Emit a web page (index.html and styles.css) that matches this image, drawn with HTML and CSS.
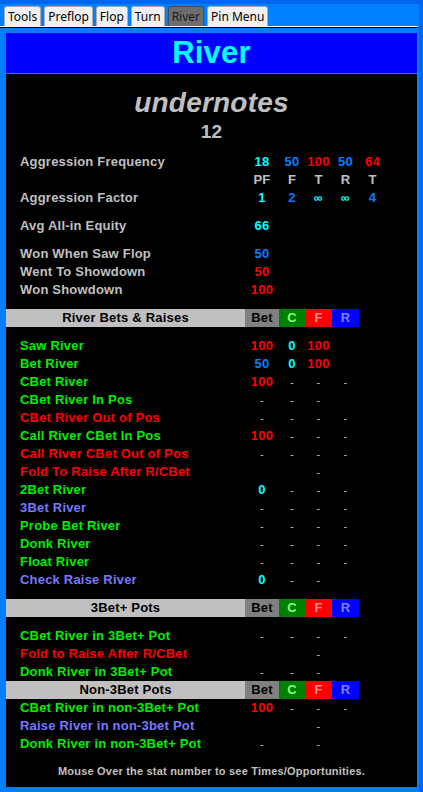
FILE: index.html
```html
<!DOCTYPE html>
<html lang="en">
<head>
  <meta charset="UTF-8">
  <meta name="viewport" content="width=device-width, initial-scale=1.0">
  <title>River</title>
  <link rel="stylesheet" href="styles.css">
</head>
<body>
  <div id="window">
    <div class="tabs">
      <span class="tab">Tools</span>
      <span class="tab">Preflop</span>
      <span class="tab">Flop</span>
      <span class="tab">Turn</span>
      <span class="tab active">River</span>
      <span class="tab">Pin Menu</span>
    </div>
    <div class="tab-line"></div>

    <div id="panel">
      <div class="title">River</div>

      <div class="player">undernotes</div>
      <div class="hands">12</div>

      <div class="row first">
        <span class="lbl gray">Aggression Frequency</span>
        <span class="cyan">18</span><span class="blue">50</span><span class="red">100</span><span class="blue">50</span><span class="red">64</span>
      </div>
      <div class="row">
        <span></span>
        <span class="gray">PF</span><span class="gray">F</span><span class="gray">T</span><span class="gray">R</span><span class="gray">T</span>
      </div>
      <div class="row">
        <span class="lbl gray">Aggression Factor</span>
        <span class="cyan">1</span><span class="blue">2</span><span class="cyan inf">&infin;</span><span class="cyan inf">&infin;</span><span class="blue">4</span>
      </div>
      <div class="row gap">
        <span class="lbl gray">Avg All-in Equity</span>
        <span class="cyan">66</span>
      </div>
      <div class="row gap">
        <span class="lbl gray">Won When Saw Flop</span>
        <span class="blue">50</span>
      </div>
      <div class="row">
        <span class="lbl gray">Went To Showdown</span>
        <span class="red">50</span>
      </div>
      <div class="row">
        <span class="lbl gray">Won Showdown</span>
        <span class="red">100</span>
      </div>

      <div class="section gap">
        <span class="sec-name">River Bets &amp; Raises</span>
        <span class="h-bet">Bet</span><span class="h-c">C</span><span class="h-f">F</span><span class="h-r">R</span>
      </div>

      <div class="row gap">
        <span class="lbl green">Saw River</span>
        <span class="red">100</span><span class="cyan">0</span><span class="red">100</span>
      </div>
      <div class="row">
        <span class="lbl green">Bet River</span>
        <span class="blue">50</span><span class="cyan">0</span><span class="red">100</span>
      </div>
      <div class="row">
        <span class="lbl green">CBet River</span>
        <span class="red">100</span><span class="dash">-</span><span class="dash">-</span><span class="dash">-</span>
      </div>
      <div class="row">
        <span class="lbl green">CBet River In Pos</span>
        <span class="dash">-</span><span class="dash">-</span><span class="dash">-</span>
      </div>
      <div class="row">
        <span class="lbl red">CBet River Out of Pos</span>
        <span class="dash">-</span><span class="dash">-</span><span class="dash">-</span><span class="dash">-</span>
      </div>
      <div class="row">
        <span class="lbl green">Call River CBet In Pos</span>
        <span class="red">100</span><span class="dash">-</span><span class="dash">-</span><span class="dash">-</span>
      </div>
      <div class="row">
        <span class="lbl red">Call River CBet Out of Pos</span>
        <span class="dash">-</span><span class="dash">-</span><span class="dash">-</span><span class="dash">-</span>
      </div>
      <div class="row">
        <span class="lbl red">Fold To Raise After R/CBet</span>
        <span></span><span></span><span class="dash">-</span>
      </div>
      <div class="row">
        <span class="lbl green">2Bet River</span>
        <span class="cyan">0</span><span class="dash">-</span><span class="dash">-</span><span class="dash">-</span>
      </div>
      <div class="row">
        <span class="lbl purple">3Bet River</span>
        <span class="dash">-</span><span class="dash">-</span><span class="dash">-</span><span class="dash">-</span>
      </div>
      <div class="row">
        <span class="lbl green">Probe Bet River</span>
        <span class="dash">-</span><span class="dash">-</span><span class="dash">-</span><span class="dash">-</span>
      </div>
      <div class="row">
        <span class="lbl green">Donk River</span>
        <span class="dash">-</span><span class="dash">-</span><span class="dash">-</span><span class="dash">-</span>
      </div>
      <div class="row">
        <span class="lbl green">Float River</span>
        <span class="dash">-</span><span class="dash">-</span><span class="dash">-</span><span class="dash">-</span>
      </div>
      <div class="row">
        <span class="lbl purple">Check Raise River</span>
        <span class="cyan">0</span><span class="dash">-</span><span class="dash">-</span>
      </div>

      <div class="section gap">
        <span class="sec-name">3Bet+ Pots</span>
        <span class="h-bet">Bet</span><span class="h-c">C</span><span class="h-f">F</span><span class="h-r">R</span>
      </div>

      <div class="row gap">
        <span class="lbl green">CBet River in 3Bet+ Pot</span>
        <span class="dash">-</span><span class="dash">-</span><span class="dash">-</span><span class="dash">-</span>
      </div>
      <div class="row">
        <span class="lbl red">Fold to Raise After R/CBet</span>
        <span></span><span></span><span class="dash">-</span>
      </div>
      <div class="row">
        <span class="lbl green">Donk River in 3Bet+ Pot</span>
        <span class="dash">-</span><span class="dash">-</span><span class="dash">-</span>
      </div>

      <div class="section">
        <span class="sec-name">Non-3Bet Pots</span>
        <span class="h-bet">Bet</span><span class="h-c">C</span><span class="h-f">F</span><span class="h-r">R</span>
      </div>

      <div class="row">
        <span class="lbl green">CBet River in non-3Bet+ Pot</span>
        <span class="red">100</span><span class="dash">-</span><span class="dash">-</span><span class="dash">-</span>
      </div>
      <div class="row">
        <span class="lbl purple">Raise River in non-3bet Pot</span>
        <span></span><span></span><span class="dash">-</span>
      </div>
      <div class="row">
        <span class="lbl green">Donk River in non-3Bet+ Pot</span>
        <span class="dash">-</span><span></span><span class="dash">-</span>
      </div>

      <div class="footer">Mouse Over the stat number to see Times/Opportunities.</div>
    </div>
  </div>
</body>
</html>
```

FILE: styles.css
```css
body {
  margin: 0;
  background: #0066ee;
  font-family: 'Liberation Sans', Arial, sans-serif;
}
#window {
  margin: 4px 4px 0 0;
  height: 788px;
  background: #0080ff;
  overflow: hidden;
}
.tabs {
  display: flex;
  gap: 3px;
  padding: 2px 0 0 4px;
  height: 20px;
}
.tab {
  font-family: 'Noto Sans', sans-serif;
  font-size: 12px;
  line-height: 19px;
  color: #000;
  background: #f0f0f0;
  border: 1px solid #adadad;
  border-bottom: none;
  border-radius: 3px 3px 0 0;
  padding: 0 3px;
}
.tab.active {
  background: #6e6e6e;
  border-color: #4a4a4a;
  color: #1a1a1a;
}
.tab-line {
  width: 418px;
  height: 1px;
  background: #fff;
  border-bottom: 1px solid #000;
}
#panel {
  margin: 5px 0 0 6px;
  width: 411px;
  height: 754px;
  background: #000;
  font-size: 13px;
  font-weight: 700;
  letter-spacing: 0.2px;
}
.title {
  height: 40px;
  background: #0000ff;
  border-bottom: 1px solid #0080ff;
  color: #00ffff;
  font-size: 31px;
  line-height: 40px;
  text-align: center;
}
.player {
  margin-top: 14px;
  height: 30px;
  line-height: 30px;
  text-align: center;
  color: #c0c0c0;
  font-size: 28px;
  font-style: italic;
}
.hands {
  height: 28px;
  line-height: 28px;
  text-align: center;
  color: #c0c0c0;
  font-size: 19px;
}
.row {
  display: grid;
  grid-template-columns: 225px 34px 26px 27px 27px 27px;
  padding-left: 14px;
  height: 18px;
  line-height: 18px;
  text-align: center;
}
.row.first {
  margin-top: 7px;
}
.gap {
  margin-top: 10px;
}
.lbl {
  text-align: left;
  white-space: nowrap;
}
.section {
  display: grid;
  grid-template-columns: 239px 34px 26px 27px 27px;
  height: 18px;
  line-height: 18px;
  text-align: center;
}
.sec-name {
  background: #c0c0c0;
  color: #000;
}
.h-bet {
  background: #808080;
  color: #000;
}
.h-c {
  background: #008000;
  color: #80ff80;
}
.h-f {
  background: #ff0000;
  color: #ff9090;
}
.h-r {
  background: #0000ff;
  color: #8080ff;
}
.gray { color: #c0c0c0; }
.green { color: #00ee00; }
.red { color: #ff0000; }
.purple { color: #7878ff; }
.cyan { color: #00ffff; }
.blue { color: #0080ff; }
.dash {
  color: #c8c0b0;
  font-weight: 400;
  font-size: 11px;
}
.inf {
  font-size: 12px;
}
.footer {
  margin-top: 9px;
  height: 18px;
  line-height: 18px;
  text-align: center;
  color: #c0c0c0;
  font-size: 11px;
  letter-spacing: 0.2px;
}
```
